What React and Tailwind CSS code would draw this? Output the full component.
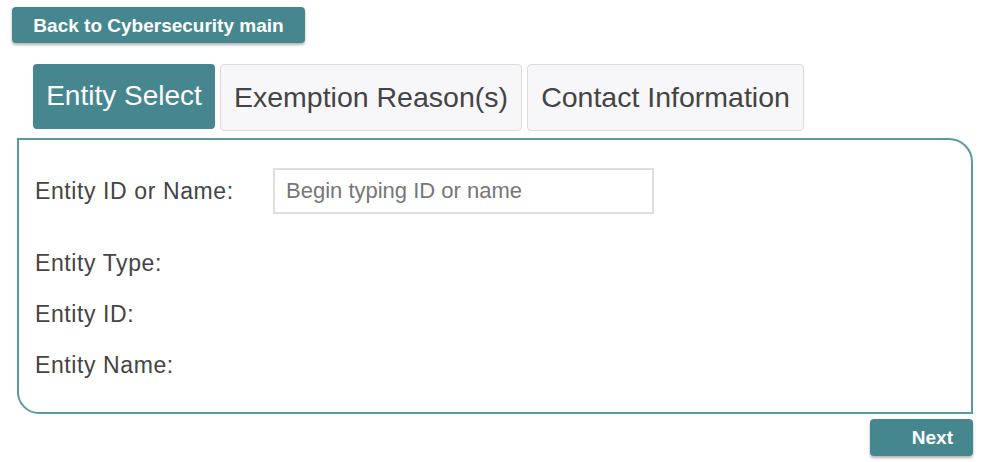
export default function App() {
  const font = "font-['Liberation_Sans',Arial,sans-serif]";
  return (
    <div className={`w-[1000px] h-[462px] bg-white overflow-hidden ${font}`}>
      <div className="pl-[12px] pt-[7px]">
        <button className="w-[293px] h-[36px] rounded-[4px] bg-[#46878f] text-white font-bold text-[19px] leading-none shadow-[0_2px_3px_rgba(0,0,0,0.3)]">
          Back to Cybersecurity main
        </button>
      </div>
      <div className="flex items-start gap-[5px] pl-[33px] mt-[21px]">
        <div className="w-[182px] h-[65px] rounded-[4px] bg-[#46878f] text-white text-[28px] leading-none flex items-center justify-center pb-[2px]">
          Entity Select
        </div>
        <div className="w-[302px] h-[67px] rounded-[4px] bg-[#f7f7f9] border border-[#dcdcdc] text-[#444] text-[28.5px] leading-none flex items-center justify-center">
          Exemption Reason(s)
        </div>
        <div className="w-[277px] h-[67px] rounded-[4px] bg-[#f7f7f9] border border-[#dcdcdc] text-[#444] text-[28.5px] leading-none flex items-center justify-center">
          Contact Information
        </div>
      </div>
      <div className="ml-[17px] mt-[7px] w-[956px] h-[276px] border-2 border-[#5a999f] rounded-tr-[24px] rounded-bl-[22px] pt-[28px] pl-[16px] text-[#444] text-[23px] tracking-[0.6px]">
        <div className="flex items-center h-[46px]">
          <div className="w-[238px]">Entity ID or Name:</div>
          <input
            className="w-[381px] h-[46px] border-2 border-[#dedede] pl-[11px] text-[22px] tracking-normal text-[#444] placeholder:text-[#777] outline-none"
            placeholder="Begin typing ID or name"
          />
        </div>
        <div className="mt-[24px]">
          <div className="h-[51px] flex items-center">Entity Type:</div>
          <div className="h-[51px] flex items-center">Entity ID:</div>
          <div className="h-[51px] flex items-center">Entity Name:</div>
        </div>
      </div>
      <div className="w-[973px] flex justify-end mt-[5px]">
        <button className="w-[103px] h-[37px] rounded-[4px] bg-[#46878f] text-white font-bold text-[19px] leading-none text-right pr-[20px] shadow-[0_2px_3px_rgba(0,0,0,0.3)]">
          Next
        </button>
      </div>
    </div>
  );
}
